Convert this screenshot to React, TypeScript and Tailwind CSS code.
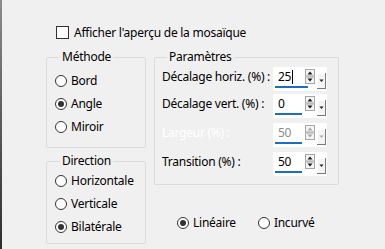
import React from "react";

type RadioProp = { label: string; checked?: boolean };

const Radio: React.FC<RadioProp> = ({ label, checked }) => {
  return (
    <div className="flex items-center gap-[4px] h-[23px]">
      <div className="w-[12px] h-[12px] rounded-full border border-[#333] bg-white flex items-center justify-center">
        {checked && <div className="w-[6px] h-[6px] rounded-full bg-[#333]" />}
      </div>
      <span className="leading-[16px] whitespace-nowrap">{label}</span>
    </div>
  );
};

type SpinProp = { value: string; disabled?: boolean; focused?: boolean };

const Spin: React.FC<SpinProp> = ({ value, disabled, focused }) => {
  const arrow = disabled ? "#a8a8a8" : "#1a1a1a";
  return (
    <div className="flex items-start w-[54px] h-[24px] bg-white">
      <div
        className={`ml-[2px] h-[21px] border-b-2 border-[#1a6fc0] pl-[3px] leading-[20px] flex items-center ${
          focused ? "w-[33px]" : "w-[27px]"
        } ${disabled ? "text-[#8c8c8c]" : "text-black"}`}
      >
        {value}
        {focused && <span className="w-px h-[14px] bg-black ml-px" />}
      </div>
      <svg
        width="10"
        height="15"
        viewBox="0 0 10 15"
        className={`mt-[2px] ${focused ? "ml-[-3px]" : "ml-[3px]"}`}
      >
        <rect x="0.5" y="0.5" width="9" height="6.5" fill="#f4f4f4" stroke="#a6a6a6" />
        <rect x="0.5" y="8" width="9" height="6.5" fill="#f4f4f4" stroke="#a6a6a6" />
        <path d="M2.5 5.5 L5 2.5 L7.5 5.5 Z" fill={arrow} />
        <path d="M2.5 9.5 L5 12.5 L7.5 9.5 Z" fill={arrow} />
      </svg>
      <svg width="9" height="16" viewBox="0 0 9 16" className="ml-[2px] mt-[6px]">
        <rect x="0" y="0" width="9" height="16" fill="#f4f4f4" />
        <path d="M0 0.5 H8.5 M0.5 0 V16" stroke="#ffffff" />
        <path d="M8.5 0 V16 M0 15.5 H9" stroke="#7a7a7a" />
        <path d="M2.5 6.5 L4.5 9 L6.5 6.5 Z" fill={arrow} />
      </svg>
    </div>
  );
};

const App = () => {
  return (
    <div className="w-[385px] h-[249px] bg-[#f0f0f0] overflow-hidden flex font-['Segoe_UI','Noto_Sans',sans-serif] text-[12px] tracking-[-0.25px] text-black">
      <div className="w-[2px] h-full bg-gradient-to-b from-[#8c8c8c] to-[#2e2e2e]" />

      <div className="pl-[44px] pt-[26px] flex flex-col">
        <div className="ml-[10px] flex items-center gap-[5px] h-[13px]">
          <div className="w-[13px] h-[13px] border border-[#333] bg-white" />
          <span className="leading-[16px] whitespace-nowrap">Afficher l'aperçu de la mosaïque</span>
        </div>

        <div className="flex gap-[8px] mt-[10px]">
          <div className="flex flex-col gap-[5px] w-[100px]">
            <fieldset className="h-[99px] border border-[#dcdcdc] rounded-[2px] px-[8px] pt-[4px]">
              <legend className="ml-[5px] px-[2px] leading-[16px]">Méthode</legend>
              <Radio label="Bord" />
              <Radio label="Angle" checked />
              <Radio label="Miroir" />
            </fieldset>
            <fieldset className="h-[91px] border border-[#dcdcdc] rounded-[2px] px-[8px] pt-0">
              <legend className="ml-[5px] px-[2px] leading-[16px]">Direction</legend>
              <Radio label="Horizontale" />
              <Radio label="Verticale" />
              <Radio label="Bilatérale" checked />
            </fieldset>
          </div>

          <div className="flex flex-col w-[185px]">
            <fieldset className="h-[136px] border border-[#dcdcdc] rounded-[2px] pl-[7px] pt-[2px]">
              <legend className="ml-[5px] px-[2px] leading-[16px]">Paramètres</legend>
              <div className="flex">
                <span className="w-[111px] pt-[2px] leading-[16px] whitespace-nowrap">Décalage horiz. (%) :</span>
                <Spin value="25" focused />
              </div>
              <div className="flex mt-[3px]">
                <span className="w-[111px] pt-[2px] leading-[16px] whitespace-nowrap">Décalage vert. (%) :</span>
                <Spin value="0" />
              </div>
              <div className="flex mt-[5px]">
                <span className="w-[111px] pt-[2px] leading-[16px] whitespace-nowrap text-white">Largeur (%) :</span>
                <Spin value="50" disabled />
              </div>
              <div className="flex mt-[5px]">
                <span className="w-[111px] pt-[2px] leading-[16px] whitespace-nowrap">Transition (%) :</span>
                <Spin value="50" />
              </div>
            </fieldset>

            <div className="flex gap-[22px] pl-[23px] mt-[26px]">
              <Radio label="Linéaire" checked />
              <Radio label="Incurvé" />
            </div>
          </div>
        </div>
      </div>
    </div>
  );
};

export default App;
